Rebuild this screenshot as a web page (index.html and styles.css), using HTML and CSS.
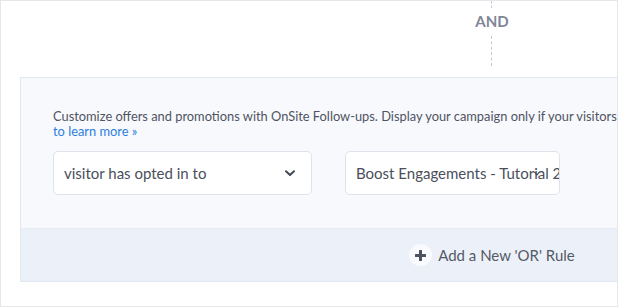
FILE: index.html
```html
<!DOCTYPE html>
<html lang="en">
<head>
<meta charset="UTF-8" />
<meta name="viewport" content="width=device-width, initial-scale=1.0" />
<title>Display Rules</title>
<link rel="stylesheet" href="styles.css">
</head>

<body>
<div class="frame">
<div class="canvas">
<!-- AND connector between rule groups -->
<div class="connector">
<span class="dash dash-top"></span>
<span class="and">AND</span>
<span class="dash dash-bottom"></span>
</div>

<section class="rule">
<div class="rule-body">
<p class="desc">
Customize offers and promotions with OnSite Follow-ups. Display your campaign only if your visitors have opted in to another campaign. <a href="#">Click here<br>to learn more &raquo;</a>
</p>

<div class="selects">
<div class="select select-condition">
<span class="select-text">visitor has opted in to</span>
<svg class="chevron" width="10" height="7" viewBox="0 0 10 7">
<path d="M1 1.2 L5 5 L9 1.2" fill="none" stroke="#454a57" stroke-width="2" stroke-linecap="round" stroke-linejoin="round"/>
</svg>
</div>

<div class="select select-campaign">
<span class="select-text">Boost Engagements - Tutorial 2</span>
<svg class="native-arrow" width="8" height="6" viewBox="0 0 8 6">
<path d="M0.5 0.8 L4 4.8 L7.5 0.8 L6 0.8 L4 3 L2 0.8 Z" fill="#444955"/>
</svg>
</div>
</div>
</div>

<div class="rule-footer">
<button class="add-or">
<span class="plus">
<svg width="11" height="11" viewBox="0 0 11 11">
<path d="M5.5 1 V10 M1 5.5 H10" stroke="#4c515e" stroke-width="3" stroke-linecap="round"/>
</svg>
</span>
Add a New 'OR' Rule
</button>
</div>
</section>
</div>
</div>
</body>
</html>
```

FILE: styles.css
```css
* {
box-sizing: border-box;
}

body {
margin: 0;
background: #fff;
font-family: Lato, "Open Sans", sans-serif;
}

/* Outer card, cuts off whatever is wider than the window */
.frame {
width: 618px;
height: 307px;
border: 1px solid #e5e7eb;
overflow: hidden;
background: #fff;
}

.canvas {
width: 982px;
}

/* AND connector */
.connector {
display: flex;
flex-direction: column;
align-items: center;
margin-left: -1px;
}

.dash {
display: block;
width: 0;
border-left: 1px dashed #c3c8d2;
}

.dash-top {
height: 7px;
}

.dash-bottom {
height: 30px;
margin-top: 2px;
}

.and {
font-size: 15px;
line-height: 26px;
font-weight: 700;
color: #7f8697;
margin-left: 1px;
}

/* Rule box */
.rule {
margin: 11px 19px 0;
border: 1px solid #e1e6f0;
background: #f8f9fd;
}

.rule-body {
padding: 31px 32px 33px;
}

.desc {
margin: 0;
font-size: 12.85px;
line-height: 15px;
color: #4f5462;
}

.desc a {
color: #2d7fe0;
text-decoration: none;
}

.selects {
display: flex;
gap: 33px;
margin-top: 12px;
}

.select {
position: relative;
display: flex;
align-items: center;
height: 44px;
padding: 0 10px;
background: #fff;
border: 1px solid #dfe3eb;
border-radius: 5px;
font-size: 15px;
color: #4a4f5b;
overflow: hidden;
}

.select-condition {
width: 259px;
justify-content: space-between;
padding-right: 16px;
}

.select-campaign {
width: 215px;
}

.select-text {
white-space: nowrap;
}

.native-arrow {
position: absolute;
right: 18px;
top: 19px;
}

/* Footer with the OR button */
.rule-footer {
height: 53px;
display: flex;
align-items: center;
justify-content: center;
background: #ecf1f9;
border-top: 1px solid #e6ebf4;
}

.add-or {
display: flex;
align-items: center;
gap: 6px;
padding: 0;
border: none;
background: none;
font-family: Lato, "Open Sans", sans-serif;
font-size: 15px;
color: #555a67;
cursor: pointer;
}

.plus {
display: flex;
align-items: center;
justify-content: center;
width: 23px;
height: 22px;
border-radius: 50%;
background: #f8fafd;
}
```
